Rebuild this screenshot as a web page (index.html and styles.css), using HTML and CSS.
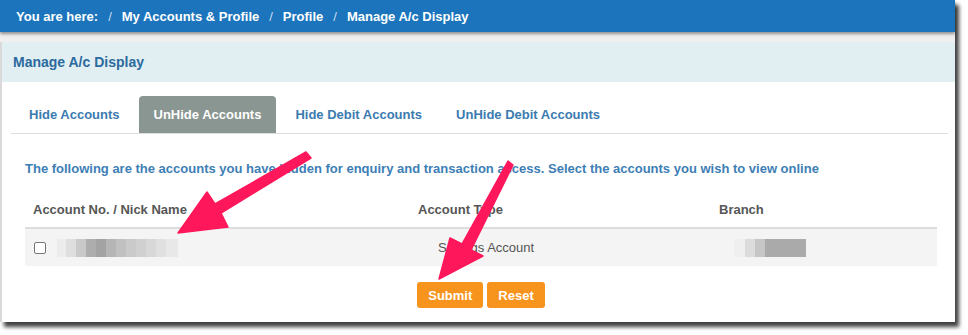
FILE: index.html
```html
<!DOCTYPE html>
<html lang="en">
<head>
  <meta charset="UTF-8" />
  <title>Manage A/c Display</title>
  <link rel="stylesheet" href="styles.css">
</head>
<body>
  <div class="frame">
    <div class="crumbs">
      <span>You are here:</span><span class="sep">/</span>
      <span>My Accounts &amp; Profile</span><span class="sep">/</span>
      <span>Profile</span><span class="sep">/</span>
      <span>Manage A/c Display</span>
    </div>
    <div class="gap"></div>

    <div class="panel">
      <div class="panel-head">Manage A/c Display</div>
      <div class="panel-body">
        <div class="tabs">
          <div class="tab">Hide Accounts</div>
          <div class="tab active">UnHide Accounts</div>
          <div class="tab">Hide Debit Accounts</div>
          <div class="tab">UnHide Debit Accounts</div>
        </div>

        <div class="content">
          <p class="intro">The following are the accounts you have hidden for enquiry and transaction access. Select the accounts you wish to view online</p>
          <table>
            <thead>
              <tr>
                <th class="col-no">Account No. / Nick Name</th>
                <th class="col-type">Account Type</th>
                <th>Branch</th>
              </tr>
            </thead>
            <tbody>
              <tr>
                <td class="col-no"><span class="check"></span><span class="blur blur-no"></span></td>
                <td class="col-type type-cell">Savings Account</td>
                <td class="branch-cell"><span class="blur blur-branch"></span></td>
              </tr>
            </tbody>
          </table>
          <div class="actions">
            <button class="btn">Submit</button>
            <button class="btn">Reset</button>
          </div>
        </div>
      </div>
    </div>
  </div>

  <!-- annotation arrows drawn over the screenshot -->
  <svg class="marks" width="968" height="335" viewBox="0 0 968 335">
    <polygon points="306,152 311,158 221,213 228,227 178,233 207,192 215,204" />
    <polygon points="508,161 513,165 471,250 483,256 439,279 450,238 462,244" />
  </svg>
</body>
</html>
```

FILE: styles.css
```css
body {
  margin: 0;
  min-height: 335px;
  background: #fff;
  font-family: 'Liberation Sans', Arial, sans-serif;
  font-size: 13px;
}

.frame {
  width: 955px;
  height: 322px;
  background: #fff;
  box-shadow: 4px 5px 4px rgba(0, 0, 0, 0.75);
}

.crumbs {
  height: 32px;
  padding-left: 16px;
  display: flex;
  align-items: center;
  background-color: #1c75bc;
  color: #fff;
  font-weight: bold;
  box-shadow: 0 2px 3px rgba(0, 0, 0, 0.4);
  position: relative;
}

.sep {
  margin: 0 10px;
  font-weight: normal;
  color: #c9dcee;
}

.gap {
  height: 10px;
  background: #efefef;
}

.panel {
  height: 280px;
  border-left: 2px solid #d9d9d9;
}

.panel-head {
  height: 40px;
  line-height: 40px;
  padding-left: 11px;
  background-color: #e1eef2;
  color: #2b6a9e;
  font-size: 14px;
  font-weight: bold;
}

.panel-body {
  padding: 14px 7px 0 9px;
}

.tabs {
  display: flex;
  padding-left: 3px;
  border-bottom: 1px solid #dedede;
}

.tab {
  height: 37px;
  line-height: 37px;
  padding: 0 15px;
  margin-right: 4px;
  color: #3b7bb0;
  font-weight: bold;
}

.tab.active {
  background-color: #8a9691;
  color: #fff;
  border-radius: 4px 4px 0 0;
}

.content {
  padding: 0 11px 0 14px;
}

.intro {
  margin: 27px 0 14px;
  line-height: 16px;
  color: #3d7eb5;
  font-weight: bold;
}

table {
  width: 100%;
  border-collapse: collapse;
  table-layout: fixed;
}

th {
  height: 36px;
  padding: 0 8px;
  text-align: left;
  color: #565656;
  font-weight: bold;
  border-bottom: 2px solid #dddddd;
}

td {
  height: 37px;
  padding: 0 8px;
  background-color: #f4f4f4;
  color: #555;
}

.col-no {
  width: 369px;
}

.col-type {
  width: 285px;
}

.type-cell {
  padding-left: 28px;
}

.branch-cell {
  padding-left: 23px;
}

.check {
  display: inline-block;
  width: 10px;
  height: 10px;
  border: 1px solid #767676;
  border-radius: 2px;
  background: #fff;
  vertical-align: middle;
  margin: 0 11px 0 1px;
}

.blur {
  display: inline-block;
  height: 18px;
  vertical-align: middle;
}

.blur-no {
  width: 121px;
  background:
    linear-gradient(to right,
      #ececec 0 9px, #dedede 9px 19px, #c9c9c9 19px 29px, #adadad 29px 39px,
      #a3a3a3 39px 49px, #b5b5b5 49px 59px, #c0c0c0 59px 69px, #cacaca 69px 79px,
      #d0d0d0 79px 89px, #d8d8d8 89px 99px, #e0e0e0 99px 109px, #e8e8e8 109px 121px);
}

.blur-branch {
  width: 72px;
  background:
    linear-gradient(to right,
      #efefef 0 11px, #dcdcdc 11px 21px, #c6c6c6 21px 31px, #aaaaaa 31px 72px);
}

.actions {
  display: flex;
  justify-content: center;
  gap: 4px;
  margin-top: 16px;
}

.btn {
  height: 26px;
  padding: 0 11px;
  border: 0;
  border-radius: 3px;
  background-color: #f7941d;
  color: #fff;
  font-family: 'Liberation Sans', Arial, sans-serif;
  font-size: 13px;
  font-weight: bold;
}

.marks {
  position: absolute;
  left: 0;
  top: 0;
  pointer-events: none;
}

.marks polygon {
  fill: #ff175b;
  stroke: #ff175b;
  stroke-width: 1.5;
  stroke-linejoin: round;
}
```
